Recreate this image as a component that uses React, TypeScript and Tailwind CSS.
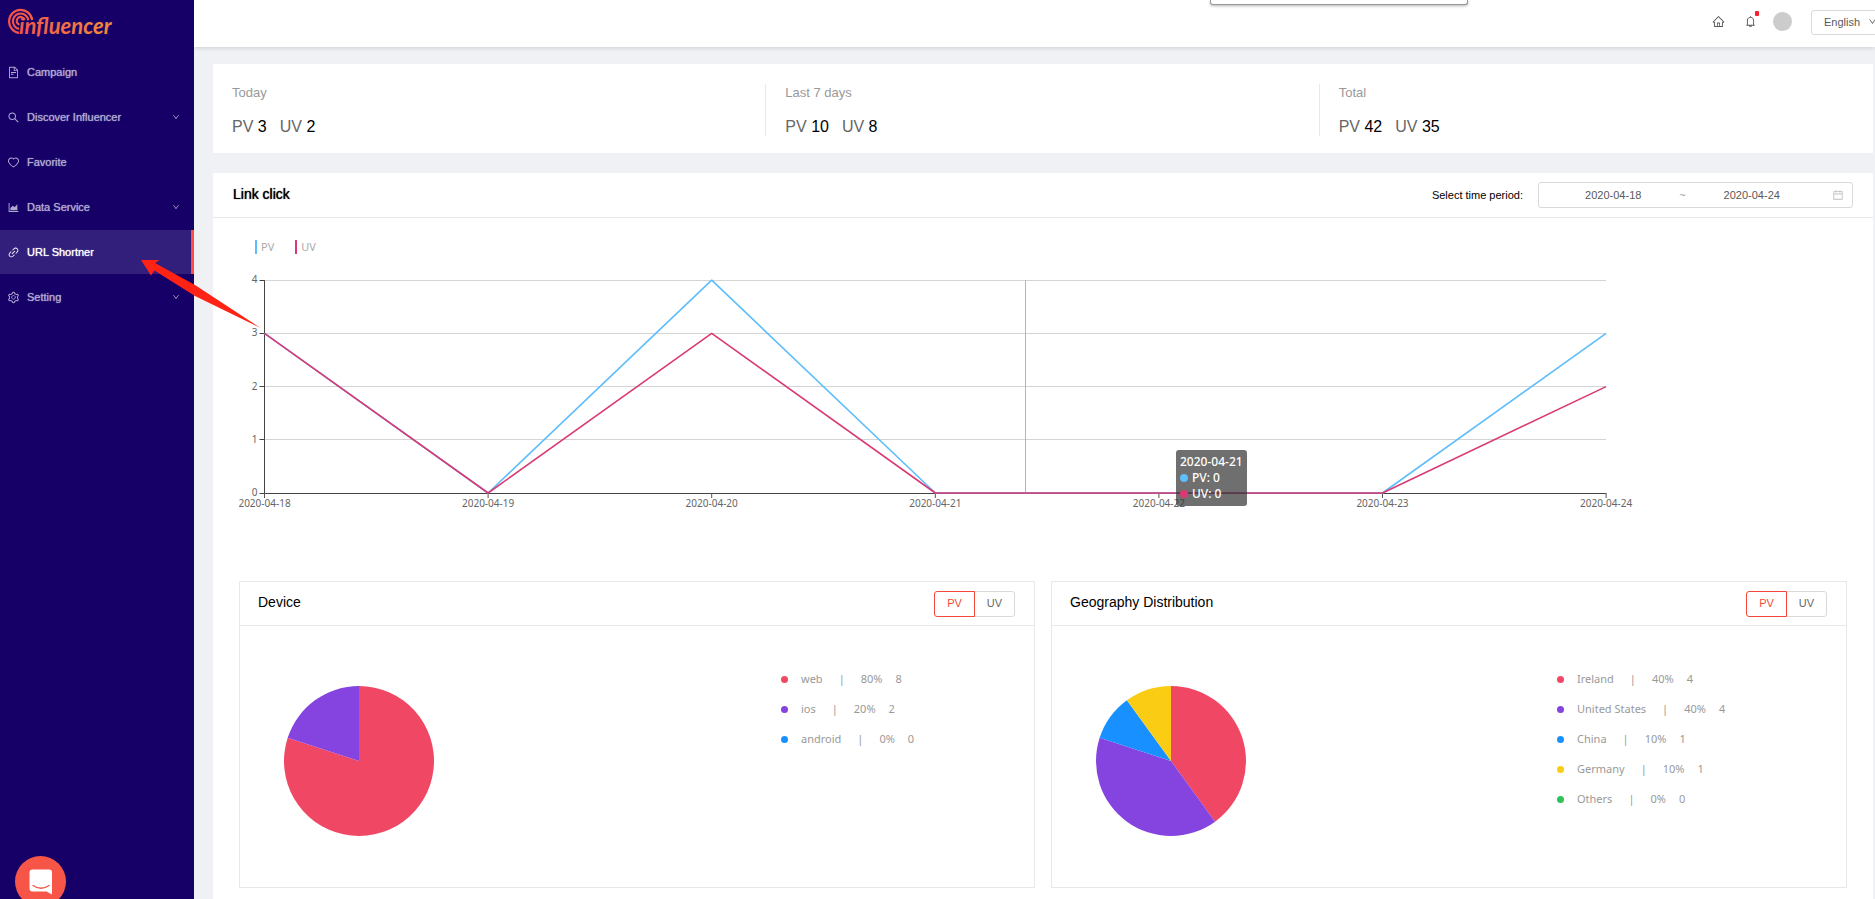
import React, { useState } from 'react';
import {
  AiOutlineAreaChart,
  AiOutlineBell,
  AiOutlineCalendar,
  AiOutlineDown,
  AiOutlineFileText,
  AiOutlineHeart,
  AiOutlineHome,
  AiOutlineLink,
  AiOutlineSearch,
  AiOutlineSetting,
} from 'react-icons/ai';

interface MenuItem {
  label: string;
  icon: React.ComponentType<{ className?: string }>;
  hasChildren?: boolean;
  active?: boolean;
}

interface Slice {
  name: string;
  percent: number;
  count: number;
  color: string;
}

interface DistributionCardProps {
  title: string;
  slices: Slice[];
  chartWidth: string;
}

const menuItems: MenuItem[] = [
  { label: 'Campaign', icon: AiOutlineFileText },
  { label: 'Discover Influencer', icon: AiOutlineSearch, hasChildren: true },
  { label: 'Favorite', icon: AiOutlineHeart },
  { label: 'Data Service', icon: AiOutlineAreaChart, hasChildren: true },
  { label: 'URL Shortner', icon: AiOutlineLink, active: true },
  { label: 'Setting', icon: AiOutlineSetting, hasChildren: true },
];

const stats = [
  { label: 'Today', pv: 3, uv: 2 },
  { label: 'Last 7 days', pv: 10, uv: 8 },
  { label: 'Total', pv: 42, uv: 35 },
];

const clicks = [
  { date: '2020-04-18', pv: 3, uv: 3 },
  { date: '2020-04-19', pv: 0, uv: 0 },
  { date: '2020-04-20', pv: 4, uv: 3 },
  { date: '2020-04-21', pv: 0, uv: 0 },
  { date: '2020-04-22', pv: 0, uv: 0 },
  { date: '2020-04-23', pv: 0, uv: 0 },
  { date: '2020-04-24', pv: 3, uv: 2 },
];

const devices: Slice[] = [
  { name: 'web', percent: 80, count: 8, color: '#f04864' },
  { name: 'ios', percent: 20, count: 2, color: '#8543e0' },
  { name: 'android', percent: 0, count: 0, color: '#1890ff' },
];

const countries: Slice[] = [
  { name: 'Ireland', percent: 40, count: 4, color: '#f04864' },
  { name: 'United States', percent: 40, count: 4, color: '#8543e0' },
  { name: 'China', percent: 10, count: 1, color: '#1890ff' },
  { name: 'Germany', percent: 10, count: 1, color: '#facc14' },
  { name: 'Others', percent: 0, count: 0, color: '#2fc25b' },
];

function Logo() {
  return (
    <svg viewBox="0 0 112 32" className="h-8 w-28" role="img" aria-label="influencer">
      <defs>
        <linearGradient id="logo" gradientUnits="userSpaceOnUse" x1="0" y1="0" x2="104" y2="0">
          <stop offset="0" stopColor="#f0504c" />
          <stop offset="1" stopColor="#f08c3c" />
        </linearGradient>
      </defs>
      <g fill="none" stroke="url(#logo)" strokeWidth="2.2">
        <path d="M24.2 14A11.6 11.6 0 1 0 11 26.9" />
        <path d="M20.4 14.4A7.8 7.8 0 1 0 11 22.9" />
        <path d="M16.6 14.2A4 4 0 1 0 11.4 18.8" />
      </g>
      <text
        x="11"
        y="28"
        fill="url(#logo)"
        fontFamily="Lato, sans-serif"
        fontSize="22"
        fontWeight="700"
        fontStyle="italic"
      >
        influencer
      </text>
    </svg>
  );
}

function Sidebar() {
  return (
    <aside className="w-[194px] shrink-0 bg-[#160068]">
      <div className="h-[50px] pt-[6px] pl-2">
        <Logo />
      </div>
      <nav className="flex flex-col gap-px">
        {menuItems.map(({ label, icon: Icon, hasChildren, active }) => (
          <a
            key={label}
            href="#"
            className={`flex h-11 items-center gap-[7px] pl-[7px] text-[11px] [text-shadow:0_0_1px] ${
              active
                ? 'border-r-3 border-[#ff4f45] bg-[#321f7c] text-white'
                : 'pr-[14px] text-[#b0aad0]'
            }`}
          >
            <Icon className="size-[13px]" />
            <span className="flex-1">{label}</span>
            {hasChildren && <AiOutlineDown className="size-2" />}
          </a>
        ))}
      </nav>
    </aside>
  );
}

function Header() {
  return (
    <header className="relative z-10 flex h-[47px] shrink-0 justify-end bg-white pt-[9px] text-[#595959] shadow-[0_1px_4px_rgba(0,21,41,0.15)]">
      <div className="absolute top-0 left-[1016px] h-[5px] w-[258px] rounded-b-[3px] border border-t-0 border-[#999] bg-white shadow-[0_1px_3px_rgba(0,0,0,0.3)]" />
      <div className="flex h-6 items-center">
        <a href="#" aria-label="Home">
          <AiOutlineHome className="size-[13px]" />
        </a>
        <button className="relative ml-[19px]" aria-label="Notifications">
          <AiOutlineBell className="size-[13px]" />
          <span className="absolute -top-1 right-0 h-[5px] w-1 translate-x-0.5 rounded-[1px] bg-[#f5222d]" />
        </button>
        <button className="ml-4 size-[19px] rounded-full bg-[#ccc]" aria-label="Account" />
      </div>
      <div className="relative -mr-4 ml-[19px]">
        <select
          aria-label="Language"
          className="h-[25px] w-20 appearance-none rounded-[3px] border border-[#d9d9d9] bg-white pl-3 text-[11px]"
        >
          <option>English</option>
        </select>
        <AiOutlineDown className="pointer-events-none absolute top-2 right-[14px] size-[9px]" />
      </div>
    </header>
  );
}

function Stats() {
  return (
    <section className="grid grid-cols-3 bg-white pt-5 pb-[17px]">
      {stats.map((stat) => (
        <div
          key={stat.label}
          className="flex flex-col gap-4 border-r border-[#e8e8e8] px-[19px] last:border-r-0"
        >
          <p className="text-[13px] leading-[18px] text-[#999]">{stat.label}</p>
          <p className="flex gap-[13px] text-base leading-[18px] text-[#666]">
            <span>
              PV <span className="text-black">{stat.pv}</span>
            </span>
            <span>
              UV <span className="text-black">{stat.uv}</span>
            </span>
          </p>
        </div>
      ))}
    </section>
  );
}

function LineChart() {
  const left = 25.5;
  const step = 223.6;
  const bottom = 223;
  const unit = 53.2;
  const right = left + step * 6;

  const x = (index: number) => left + step * index;
  const y = (value: number) => bottom - unit * value;
  const toPoints = (key: 'pv' | 'uv') => clicks.map((c, i) => `${x(i)},${y(c[key])}`).join(' ');

  return (
    <div className="relative">
      <svg viewBox="0 0 1608 250" className="w-full font-['Noto_Sans',sans-serif]" fontSize="10" fill="#666">
        {[1, 2, 3, 4].map((value) => (
          <line
            key={value}
            x1={left}
            x2={right}
            y1={Math.floor(y(value)) + 0.5}
            y2={Math.floor(y(value)) + 0.5}
            stroke="#d4d4d4"
          />
        ))}
        <path d={`M${left} ${y(4)}V${bottom + 0.5}H${right}`} fill="none" stroke="#444" />
        {[0, 1, 2, 3, 4].map((value) => (
          <g key={value}>
            <line x1={left - 5} x2={left} y1={Math.floor(y(value)) + 0.5} y2={Math.floor(y(value)) + 0.5} stroke="#444" />
            <text x={left - 7} y={y(value) + 3} textAnchor="end">
              {value}
            </text>
          </g>
        ))}
        {clicks.map((click, i) => (
          <g key={click.date}>
            <line x1={x(i)} x2={x(i)} y1={bottom} y2={bottom + 5} stroke="#555" />
            <text x={x(i)} y={bottom + 14} textAnchor="middle">
              {click.date}
            </text>
          </g>
        ))}
        <line x1="786.5" x2="786.5" y1={y(4)} y2={bottom} stroke="#b4b4b4" />
        <polyline points={toPoints('pv')} fill="none" stroke="#5ebdfb" strokeWidth="1.6" strokeLinejoin="bevel" />
        <polyline points={toPoints('uv')} fill="none" stroke="#d93a76" strokeWidth="1.6" strokeLinejoin="bevel" />
      </svg>
      <div className="absolute top-[180px] left-[937px] rounded-[3px] bg-[rgba(50,50,50,0.7)] p-1 font-['Noto_Sans',sans-serif] text-[12px] leading-4 font-medium text-white">
        <p>2020-04-21</p>
        <p className="flex items-center gap-1">
          <span className="size-2 rounded-full bg-[#5ebdfb]" />
          PV: 0
        </p>
        <p className="flex items-center gap-1">
          <span className="size-2 rounded-full bg-[#d93a76]" />
          UV: 0
        </p>
      </div>
    </div>
  );
}

function PieChart({ slices }: { slices: Slice[] }) {
  let start = 0;

  return (
    <svg viewBox="-75 -75 150 150" className="size-[150px]">
      {slices
        .filter((slice) => slice.percent > 0)
        .map((slice) => {
          const from = (start / 100) * Math.PI * 2;
          start += slice.percent;
          const to = (start / 100) * Math.PI * 2;
          const large = slice.percent > 50 ? 1 : 0;
          return (
            <path
              key={slice.name}
              fill={slice.color}
              d={`M0 0L${75 * Math.sin(from)} ${-75 * Math.cos(from)}A75 75 0 ${large} 1 ${75 * Math.sin(to)} ${-75 * Math.cos(to)}Z`}
            />
          );
        })}
    </svg>
  );
}

function DistributionCard({ title, slices, chartWidth }: DistributionCardProps) {
  const [metric, setMetric] = useState('PV');

  return (
    <section className="flex-1 border border-[#e8e8e8]">
      <div className="flex h-11 items-center justify-between border-b border-[#e8e8e8] pr-[19px] pl-[18px]">
        <h3 className="pb-1 text-sm text-black">{title}</h3>
        <div className="flex text-[11px]">
          {['PV', 'UV'].map((name) => (
            <button
              key={name}
              aria-pressed={metric === name}
              onClick={() => setMetric(name)}
              className={`h-[26px] w-[41px] border first:rounded-l-[3px] last:-ml-px last:rounded-r-[3px] ${
                metric === name ? 'relative border-[#f5483b] text-[#f5483b]' : 'border-[#d9d9d9] text-[#666]'
              }`}
            >
              {name}
            </button>
          ))}
        </div>
      </div>
      <div className="flex h-[261px]">
        <div className={`pt-[60px] pl-11 ${chartWidth}`}>
          <PieChart slices={slices} />
        </div>
        <ul className="flex flex-col gap-[10px] pt-[43px] font-['Noto_Sans',sans-serif] text-[11px] leading-5 text-[#999]">
          {slices.map((slice) => (
            <li key={slice.name} className="flex items-center">
              <span className="mr-[13px] size-[7px] rounded-full" style={{ backgroundColor: slice.color }} />
              {slice.name}
              <span className="mx-4">|</span>
              {slice.percent}%<span className="ml-[13px]">{slice.count}</span>
            </li>
          ))}
        </ul>
      </div>
    </section>
  );
}

function LinkClick() {
  const [startDate, setStartDate] = useState('2020-04-18');
  const [endDate, setEndDate] = useState('2020-04-24');

  return (
    <section className="flex flex-1 flex-col bg-white">
      <div className="flex h-[45px] items-center justify-between border-b border-[#e8e8e8] px-5">
        <h2 className="pb-0.5 text-sm text-black [text-shadow:0_0_1px]">Link click</h2>
        <div className="flex items-center gap-[15px] text-[11px]">
          <label htmlFor="start" className="text-black">
            Select time period:
          </label>
          <div className="flex h-[26px] w-[315px] items-center rounded-[3px] border border-[#d9d9d9] pl-[10px] text-[#595959]">
            <input
              id="start"
              value={startDate}
              onChange={(e) => setStartDate(e.target.value)}
              className="min-w-0 flex-1 text-center outline-none"
            />
            <span className="w-[10px] text-center text-[#999]">~</span>
            <input
              aria-label="End date"
              value={endDate}
              onChange={(e) => setEndDate(e.target.value)}
              className="min-w-0 flex-1 text-center outline-none"
            />
            <AiOutlineCalendar className="mr-2 ml-4 size-3 text-[#bfbfbf]" />
          </div>
        </div>
      </div>

      <div className="flex flex-1 flex-col px-[26px] pt-[22px] pb-[11px]">
        <div className="flex gap-[21px] pl-4 font-['Noto_Sans',sans-serif] text-[11px] leading-[14px] text-[#aaa]">
          <span className="border-l-2 border-[#5ebdfb] pl-1">PV</span>
          <span className="border-l-2 border-[#d93a76] pl-1">UV</span>
        </div>
        <div className="mt-4">
          <LineChart />
        </div>
        <div className="mt-[61px] flex gap-4">
          <DistributionCard title="Device" slices={devices} chartWidth="w-[541px]" />
          <DistributionCard title="Geography Distribution" slices={countries} chartWidth="w-[505px]" />
        </div>
      </div>
    </section>
  );
}

export default function App() {
  return (
    <div className="relative flex min-h-screen overflow-hidden bg-[#f0f1f5] font-['Liberation_Sans',Arial,sans-serif]">
      <Sidebar />
      <div className="flex min-w-0 flex-1 flex-col">
        <Header />
        <main className="flex flex-1 flex-col gap-5 pt-[17px] pr-[2px] pl-[19px]">
          <Stats />
          <LinkClick />
        </main>
      </div>

      {/* arrow pointing at the active menu item */}
      <svg viewBox="0 0 120 68" className="pointer-events-none absolute top-[260px] left-[141px] z-20 h-[68px] w-[120px]">
        <path d="M0 0L18.5 0L14 3L54 25L119.5 68L54 36L13.500 10.500L10 15.500Z" fill="#ff2315" />
      </svg>

      <button
        aria-label="Open chat"
        className="fixed -bottom-2 left-[15px] z-20 flex size-[51px] items-center justify-center rounded-full bg-[#f75547] shadow-md"
      >
        <svg viewBox="0 0 24 26" className="h-[26px] w-6">
          <path d="M3.500 0.500H20A3 3 0 0 1 23 3.500V25.500L17.500 22.500H3.500A3 3 0 0 1 .5 19.500V3.500A3 3 0 0 1 3.500 .5Z" fill="#fff" />
          <path d="M4 16.500Q12 22 20 16.500" fill="none" stroke="#f75547" strokeWidth="1.300" strokeLinecap="round" />
        </svg>
      </button>
    </div>
  );
}
